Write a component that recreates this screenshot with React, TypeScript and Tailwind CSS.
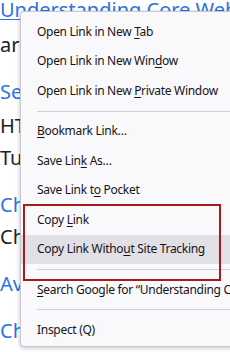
import React from 'react'

type Item = { label: React.ReactNode; active?: boolean }

function U({ children }: { children: React.ReactNode }) {
    return <span className="underline underline-offset-2 decoration-1">{children}</span>
}

function MenuItem({ label, active }: Item) {
    return (
        <div className={`h-[29.6px] flex items-center pl-[16px] whitespace-nowrap ${active ? 'bg-[#e0e0e6]' : ''}`}>
            <span>{label}</span>
        </div>
    )
}

function Separator() {
    return (
        <div className="h-[10.5px] flex items-center pl-[16px]">
            <div className="h-px w-full bg-[#cfcfd8]" />
        </div>
    )
}

const pageLines = [
    { text: 'Understanding Core Web Vitals', link: true, underline: true, mt: 'mt-[-6px]' },
    { text: 'are the metrics that Google', link: false, mt: 'mt-[3px]' },
    { text: 'Search Console Help', link: true, mt: 'mt-[15px]' },
    { text: 'HTTP Archive report', link: false, mt: 'mt-[2px]' },
    { text: 'Tutorials and guides', link: false, mt: 'mt-0' },
    { text: 'Chrome UX Report', link: true, mt: 'mt-[15px]' },
    { text: 'Chrome DevTools', link: false, mt: 'mt-0' },
    { text: 'Average page load', link: true, mt: 'mt-[15px]' },
    { text: 'Chrome for Developers', link: true, mt: 'mt-[15px]' },
]

export default function App() {
    return (
        <div className="relative w-[230px] h-[352px] overflow-hidden bg-white font-['Noto_Sans','Open_Sans',sans-serif]">
            <div className="flex flex-col text-[20px] leading-[32px] whitespace-nowrap">
                {pageLines.map((l, i) => (
                    <div
                        key={i}
                        className={`${l.mt} ${l.link ? 'text-[#2a74e4]' : 'text-[#202124]'} ${l.underline ? 'underline decoration-1 underline-offset-2' : ''}`}
                    >
                        {l.text}
                    </div>
                ))}
            </div>

            <div className="absolute left-[20px] top-[11px] w-[240px] h-[336px] bg-[#f9f9fb] border border-[#c8c8ce] rounded-[4px] shadow-[0_1px_4px_rgba(0,0,0,0.25)] pt-[5px] text-[12px] text-[#15141a] tracking-[-0.3px]">
                <MenuItem label={<>Open Link in New <U>T</U>ab</>} />
                <MenuItem label={<>Open Link in New Win<U>d</U>ow</>} />
                <MenuItem label={<>Open Link in New <U>P</U>rivate Window</>} />
                <Separator />
                <MenuItem label={<><U>B</U>ookmark Link…</>} />
                <MenuItem label={<>Save Lin<U>k</U> As…</>} />
                <MenuItem label={<>Save Link t<U>o</U> Pocket</>} />
                <MenuItem label={<>Copy <U>L</U>ink</>} />
                <MenuItem active label={<>Copy Link Witho<U>u</U>t Site Tracking</>} />
                <Separator />
                <MenuItem label={<><U>S</U>earch Google for “Understanding C…</>} />
                <Separator />
                <MenuItem label={<>Inspect (Q)</>} />
            </div>

            <div className="absolute left-[23px] top-[204px] w-[198px] h-[77px] border-2 border-[#a81b1b] pointer-events-none" />
        </div>
    )
}
